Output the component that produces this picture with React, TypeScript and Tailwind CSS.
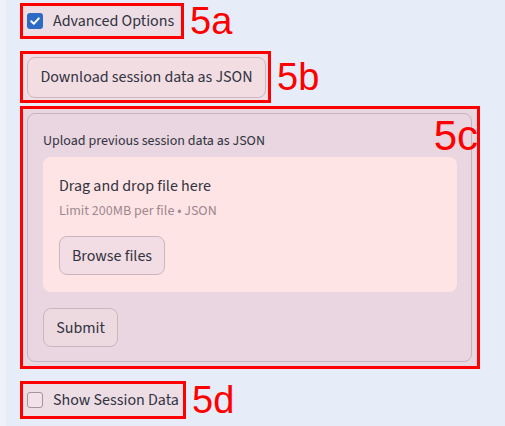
import React from "react";

const font = { fontFamily: "'Source Sans 3', Lato, 'Noto Sans', sans-serif" };

function Label({ children, className = "" }: { children: React.ReactNode; className?: string }) {
  return (
    <span
      className={"leading-[30px] text-[#ff0000] " + className}
      style={{ fontFamily: "'Liberation Sans', Arial, sans-serif" }}
    >
      {children}
    </span>
  );
}

export default function App() {
  return (
    <div className="w-[505px] h-[426px] bg-[#e6ecf8] flex overflow-hidden text-[#31333f]" style={font}>
      <div className="w-[6px] h-full bg-[#eef1f9]" />
      <div className="flex flex-col pl-[14px] pt-[3px]">
        {/* 5a */}
        <div className="flex items-center gap-[6px]">
          <div className="w-[164px] h-[36px] border-[3px] border-[#ff0000] bg-[#eddde5] flex items-center pl-[4px] gap-[10px]">
            <div className="w-[16px] h-[16px] rounded-[3px] bg-[#2d6ac4] flex items-center justify-center">
              <svg width="12" height="12" viewBox="0 0 12 12" fill="none">
                <path d="M2.2 6.2 L4.8 8.7 L9.8 3.4" stroke="white" strokeWidth="2" strokeLinecap="round" strokeLinejoin="round" />
              </svg>
            </div>
            <span className="text-[16px]">Advanced Options</span>
          </div>
          <Label className="text-[38px]">5a</Label>
        </div>

        {/* 5b */}
        <div className="flex items-center gap-[6px] mt-[12px]">
          <div className="w-[251px] h-[52px] border-[3px] border-[#ff0000] bg-[#f1dee4] flex items-center pl-[4px]">
            <div className="w-[239px] h-[41px] rounded-[8px] border border-[#cbb6bf] bg-[#f2dde3] flex items-center justify-center text-[16px]">
              Download session data as JSON
            </div>
          </div>
          <Label className="text-[38px]">5b</Label>
        </div>

        {/* 5c */}
        <div className="relative mt-[3px] w-[460px] h-[263px] border-[3px] border-[#ff0000] bg-[#e9d7e0] pl-[4px] pt-[4px]">
          <div className="w-[445px] h-[249px] rounded-[8px] border border-[#c7b3bd] bg-[#e9d6e0] px-[15px] pt-[17px] flex flex-col">
            <div className="text-[14px] leading-[20px]">Upload previous session data as JSON</div>
            <div className="mt-[6px] w-[414px] h-[135px] rounded-[8px] bg-[#fee4e4] px-[16px] pt-[19px] flex flex-col items-start">
              <div className="text-[16px] leading-[20px]">Drag and drop file here</div>
              <div className="mt-[7px] text-[14px] leading-[16px] text-[#9e8790]">Limit 200MB per file • JSON</div>
              <div className="mt-[17px] w-[106px] h-[39px] rounded-[8px] border border-[#cbb6bf] bg-[#f1dde3] flex items-center justify-center text-[16px]">
                Browse files
              </div>
            </div>
            <div className="mt-[16px] w-[75px] h-[39px] rounded-[8px] border border-[#cbb6bf] bg-[#eddae1] flex items-center justify-center text-[16px]">
              Submit
            </div>
          </div>
          <div className="absolute right-[-1px] top-[12px]">
            <Label className="text-[42px]">5c</Label>
          </div>
        </div>

        {/* 5d */}
        <div className="flex items-center gap-[6px] mt-[12px]">
          <div className="w-[166px] h-[38px] border-[3px] border-[#ff0000] bg-[#eddde5] flex items-center pl-[4px] gap-[10px]">
            <div className="w-[16px] h-[16px] rounded-[3px] border border-[#a8939c] bg-[#f2e1e6]" />
            <span className="text-[16px]">Show Session Data</span>
          </div>
          <Label className="text-[38px]">5d</Label>
        </div>
      </div>
    </div>
  );
}
